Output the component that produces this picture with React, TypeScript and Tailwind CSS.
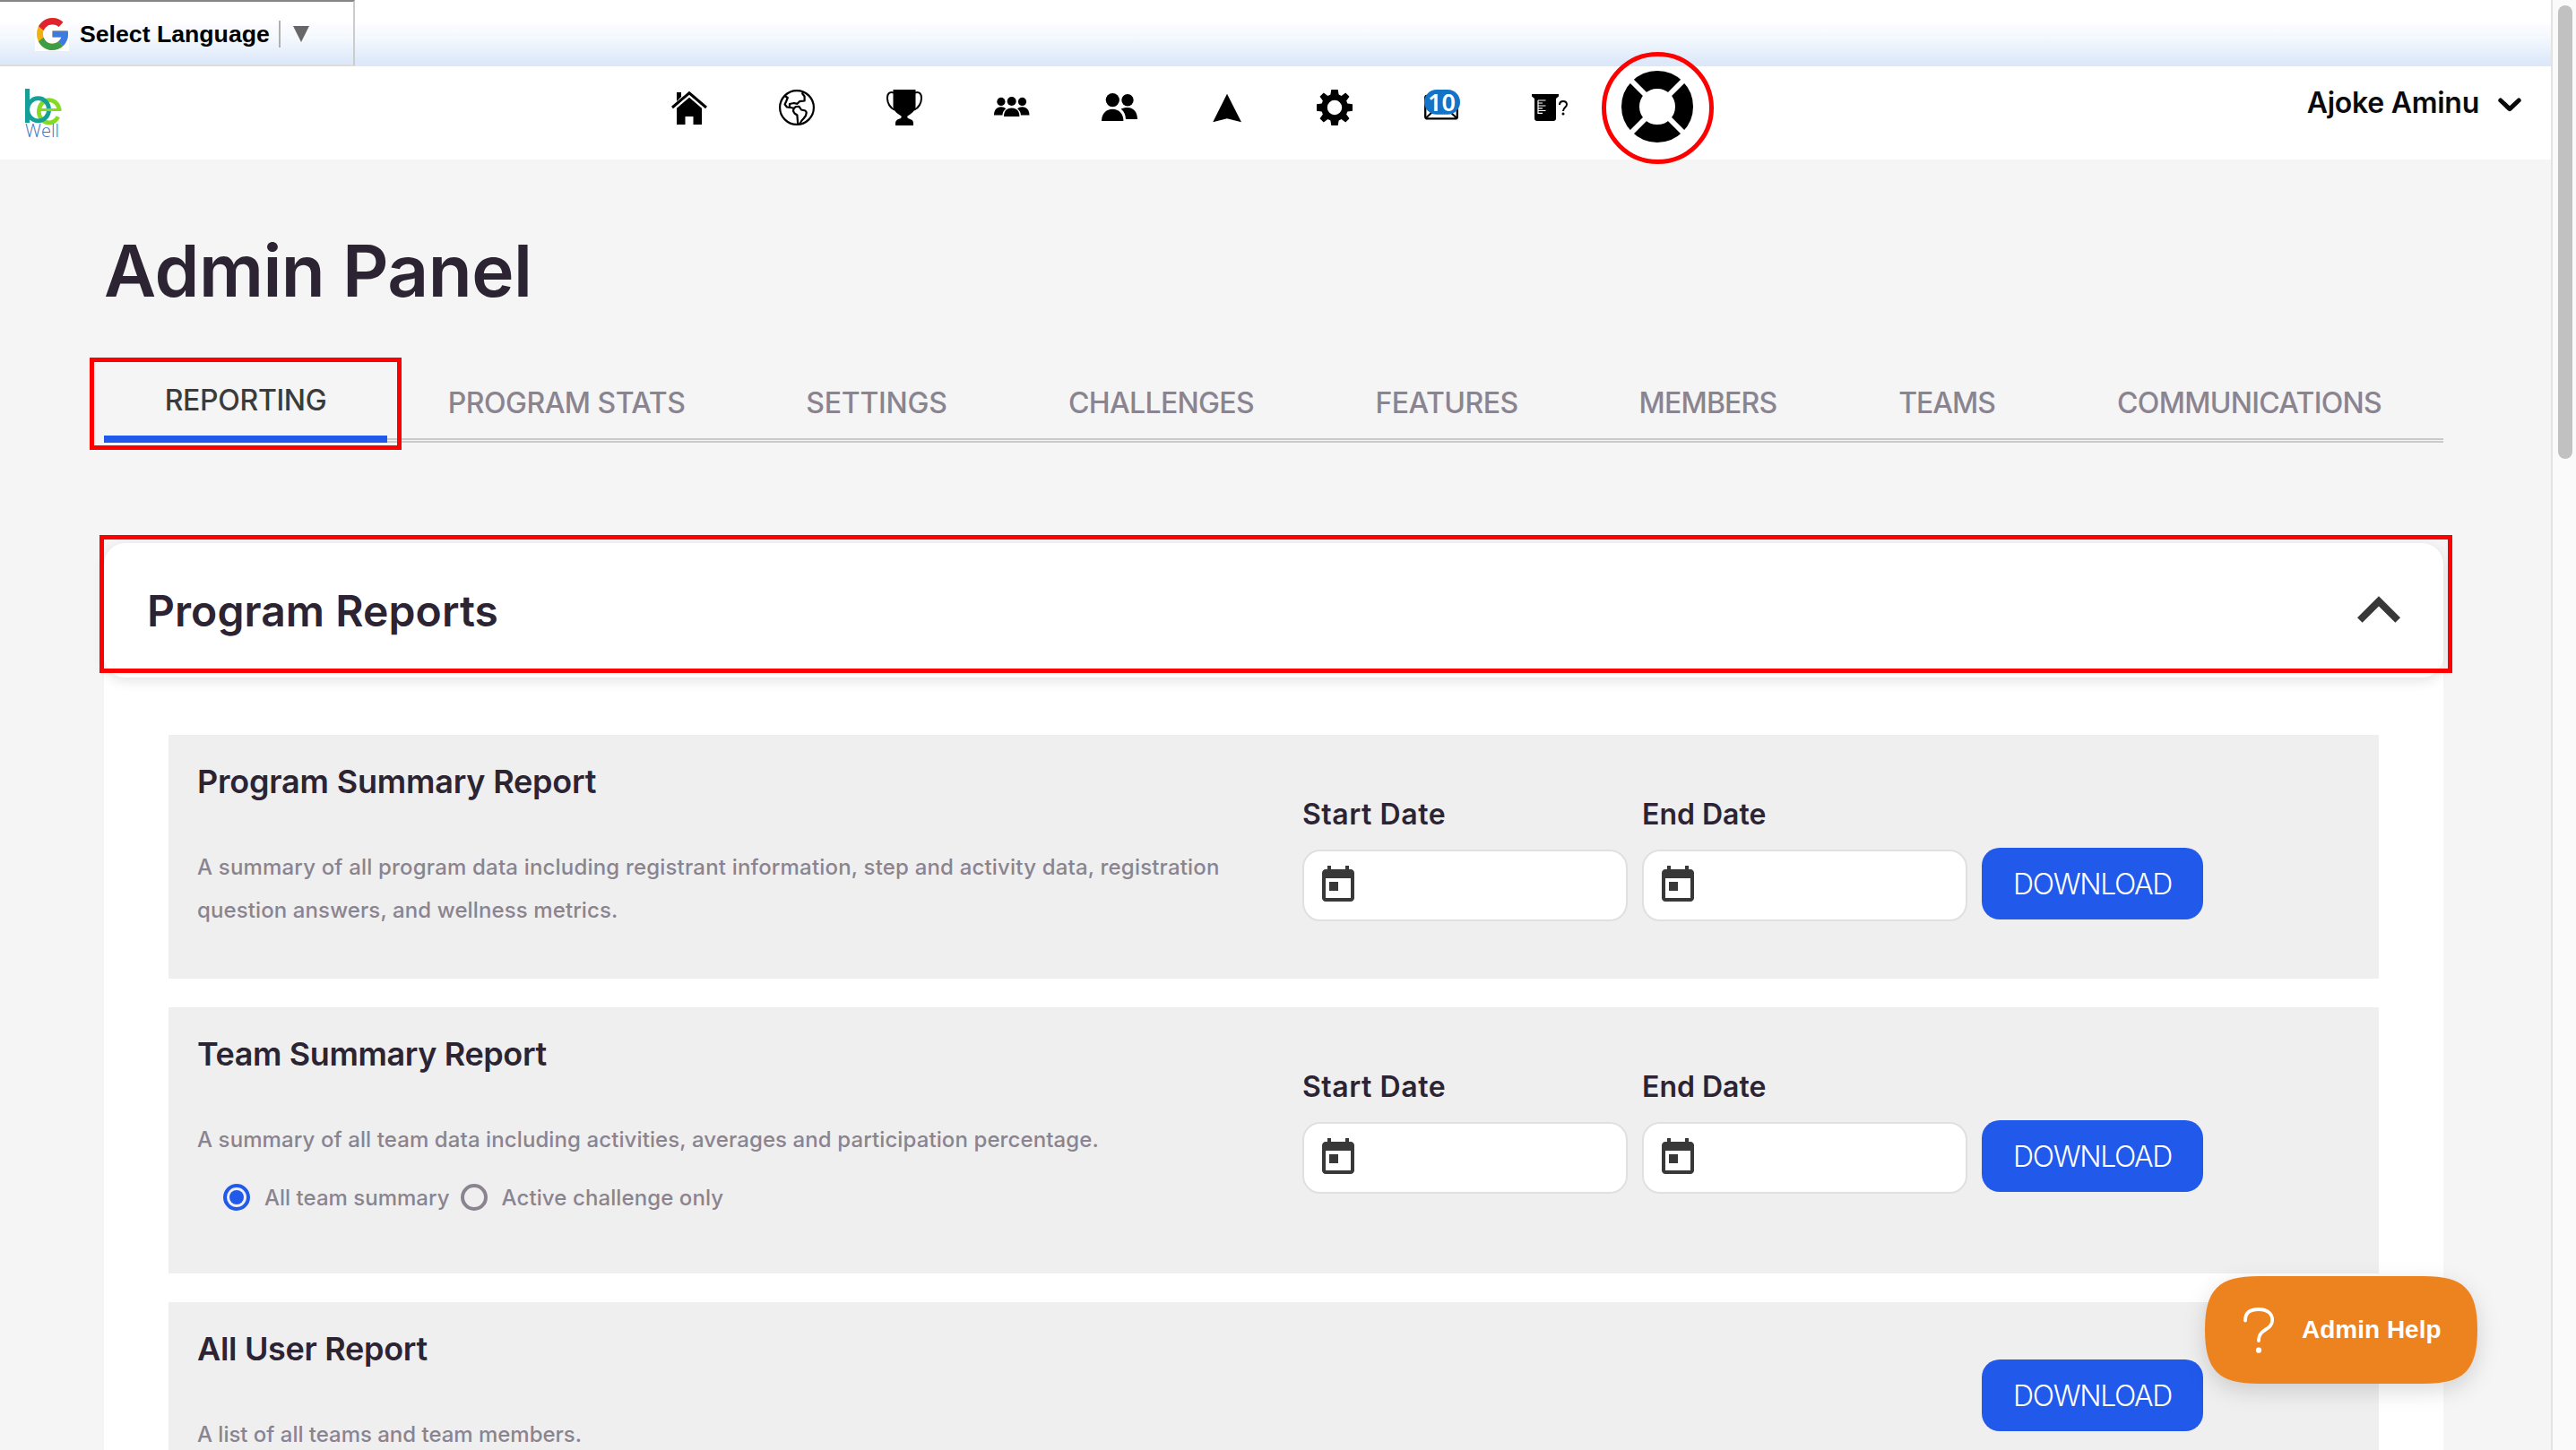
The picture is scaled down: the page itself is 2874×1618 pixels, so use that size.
import type { ReactNode } from "react";

function GoogleLogo() {
  return (
    <div className="flex h-[37px] w-[38px] items-center justify-center bg-white">
      <svg className="h-9 w-[35px]" viewBox="4 4 40 40" preserveAspectRatio="none">
        <path fill="#f2b10e" d="M43.611,20.083H42V20H24v8h11.303c-1.649,4.657-6.08,8-11.303,8c-6.627,0-12-5.373-12-12c0-6.627,5.373-12,12-12c3.059,0,5.842,1.154,7.961,3.039l5.657-5.657C34.046,6.053,29.268,4,24,4C12.955,4,4,12.955,4,24c0,11.045,8.955,20,20,20c11.045,0,20-8.955,20-20C44,22.659,43.862,21.35,43.611,20.083z" />
        <path fill="#e0242f" d="M6.306,14.691l6.571,4.819C14.655,15.108,18.961,12,24,12c3.059,0,5.842,1.154,7.961,3.039l5.657-5.657C34.046,6.053,29.268,4,24,4C16.318,4,9.656,8.337,6.306,14.691z" />
        <path fill="#3e9e45" d="M24,44c5.166,0,9.86-1.977,13.409-5.192l-6.19-5.238C29.211,35.091,26.715,36,24,36c-5.202,0-9.619-3.317-11.283-7.946l-6.522,5.025C9.505,39.556,16.227,44,24,44z" />
        <path fill="#3d7be0" d="M43.611,20.083H42V20H24v8h11.303c-0.792,2.237-2.231,4.166-4.087,5.571l6.19,5.238C36.971,39.205,44,34,44,24C44,22.659,43.862,21.35,43.611,20.083z" />
      </svg>
    </div>
  );
}

function BeWellLogo() {
  return (
    <svg className="mt-[25px] ml-7 h-14 w-[42px] shrink-0 overflow-visible" viewBox="0 0 42 56">
      <path d="M36.8 31.3A11.4 12.6 0 1 1 38 23" fill="none" stroke="#86db22" strokeWidth="4.8" />
      <ellipse cx="14.6" cy="23.3" rx="12" ry="12.6" fill="none" stroke="#159f98" strokeWidth="4.8" />
      <rect x="0" y="0" width="5" height="38" fill="#159f98" />
      <rect x="16.5" y="22" width="24" height="3" fill="#86db22" />
      <text x="0" y="53.5" fontFamily="Open Sans, sans-serif" fontWeight="300" fontSize="20" fill="#4470bd" textLength="38" lengthAdjust="spacingAndGlyphs">
        Well
      </text>
    </svg>
  );
}

function Icon({ children }: { children: ReactNode }) {
  return (
    <svg className="h-10 w-10 shrink-0 overflow-visible" viewBox="0 0 40 40" fill="#000">
      {children}
    </svg>
  );
}

function NavIcons() {
  return (
    <nav className="mt-[26px] ml-[679px] flex gap-20">
      <Icon>
        <path d="M6 3h5v5L6 13z" />
        <path d="M1 20L20 3.8L39 20" fill="none" stroke="#000" strokeWidth="3" />
        <path d="M6 20.8L20 8.8L34 20.8V39H24.5V30H15.5V39H6z" />
      </Icon>
      <Icon>
        <g fill="none" stroke="#000" strokeWidth="2.2" strokeLinejoin="round">
          <circle cx="20" cy="20" r="18.9" />
          <path d="M6.5 7L9.8 9L8.2 13L6.6 16.5L9 19.5L12 19.8L16.6 20.8L19 19L22.5 18.8L25 22.5L29.5 23.5L30.8 25.5L30 29L27.8 32L25.5 34.5L23 38.5" />
          <path d="M27 2L26.2 4.5L28.6 7.5V12.5L23 13.2L20.5 15.8L16.8 15L12 16L12 19.5" />
          <path d="M16.6 20.8L16 24L17.5 26.5L20.4 28.5L21.2 38.5" />
        </g>
      </Icon>
      <Icon>
        <path d="M7.5 0H32.5V19C32.5 24 27 27 23.5 29.5C23 31 23.5 32 25.5 32.5C28.5 33.5 30 35 30 37.5V40H10V37.5C10 35 11.5 33.5 14.5 32.5C16.5 32 17 31 16.5 29.5C13 27 7.5 24 7.5 19z" />
        <path d="M8 3.5C3 2 .8 5 1 10C1.2 15 4 20.5 9 22.5M32 3.5C37 2 39.2 5 39 10C38.8 15 36 20.5 31 22.5" fill="none" stroke="#000" strokeWidth="2" />
      </Icon>
      <Icon>
        <circle cx="19.7" cy="13" r="5" />
        <circle cx="7.9" cy="13.4" r="4.6" />
        <circle cx="31.5" cy="13.4" r="4.6" />
        <path d="M11 30C11 24 14 20.5 19.7 20.5S28.4 24 28.4 30z" />
        <path d="M0 28.5C0 23 3 19.3 7.9 19.3C10 19.3 12 20 13.3 21.3C11 23 9.7 25.5 9.4 28.5z" />
        <path d="M39.5 28.5C39.5 23 36.4 19.3 31.5 19.3C29.4 19.3 27.4 20 26.1 21.3C28.4 23 29.7 25.5 30 28.5z" />
      </Icon>
      <Icon>
        <circle cx="12.3" cy="11.6" r="7.6" />
        <circle cx="29" cy="11.7" r="6.7" />
        <path d="M0 35C0 27 5 21.7 12.2 21.7S24.4 27 24.4 35z" />
        <path d="M21.6 21.6C23.5 20.5 26 20 29 20C36 20 40 25.5 40 33H27C26.8 28 25 24.2 21.6 21.6z" />
      </Icon>
      <Icon>
        <path d="M20 4.7L36 36.3L20 32.3L4.2 36.3z" />
      </Icon>
      <Icon>
        <path
          fillRule="evenodd"
          d="M16.3 0H23.7L24.6 5.6L27.6 6.9L32.2 3.5L36.5 7.8L33.1 12.4L34.4 15.4L40 16.3V23.7L34.4 24.6L33.1 27.6L36.5 32.2L32.2 36.5L27.6 33.1L24.6 34.4L23.7 40H16.3L15.4 34.4L12.4 33.1L7.8 36.5L3.5 32.2L6.9 27.6L5.6 24.6L0 23.7V16.3L5.6 15.4L6.9 12.4L3.5 7.8L7.8 3.5L12.4 6.9L15.4 5.6zM20 11.8a8.2 8.2 0 1 0 0 16.4a8.2 8.2 0 1 0 0-16.4z"
        />
      </Icon>
      <Icon>
        <rect x="1.2" y="7" width="35.6" height="25.4" rx="2" fill="#fff" stroke="#000" strokeWidth="2.3" />
        <path d="M2 31.5L10 24M36 31.5L28 24" stroke="#000" strokeWidth="2" />
        <rect x="0" y="0" width="40" height="27.8" rx="13.9" fill="#1273c7" />
        <text x="19.5" y="24" textAnchor="middle" fontFamily="Noto Sans, sans-serif" fontWeight="600" fontSize="27" fill="#fff">
          10
        </text>
      </Icon>
      <Icon>
        <path d="M0 5H30V7.6L27 10V32Q27 35 24 35H6Q3 35 3 32V10L0 7.6z" />
        <path d="M7 12H15.5M7 15H12M7 18H15.5M7 20.8H12M7 23.5H15.5M7 26.3H12M7 12V27" stroke="#fff" strokeWidth="1.2" />
        <path d="M31 17C31 14.4 32.6 13 35 13C37.3 13 39 14.5 39 16.8C39 19.8 35 20 35 24" fill="none" stroke="#000" strokeWidth="2" />
        <circle cx="35" cy="27" r="1.5" />
      </Icon>
    </nav>
  );
}

function LifeBuoy() {
  return (
    <div className="relative z-10 mt-[5px] ml-[60px] h-20 w-20 shrink-0">
      <svg className="h-20 w-20" viewBox="0 0 80 80">
        <circle cx="40" cy="40" r="30" fill="none" stroke="#000" strokeWidth="20" />
        <path d="M8 8L72 72M72 8L8 72" stroke="#fff" strokeWidth="6" />
      </svg>
      <div className="absolute -top-[21px] -left-[22px] h-[125px] w-[125px] rounded-full border-[5px] border-[#fe0000]" />
    </div>
  );
}

const TABS = [
  { label: "PROGRAM STATS", cls: "w-[400px] tracking-[-0.5px]" },
  { label: "SETTINGS", cls: "w-[292px] tracking-[-0.23px]" },
  { label: "CHALLENGES", cls: "w-[343px] tracking-[-0.65px]" },
  { label: "FEATURES", cls: "w-[294px] tracking-[-0.53px]" },
  { label: "MEMBERS", cls: "w-[289px] tracking-[-0.79px]" },
  { label: "TEAMS", cls: "w-[244px] tracking-[-1.02px]" },
  { label: "COMMUNICATIONS", cls: "w-[431px] tracking-[-0.7px]" },
];

function DateField({ label, cls }: { label: string; cls: string }) {
  return (
    <div className="mt-[69px] w-[363px]">
      <div className={`text-[32px] leading-10 font-semibold text-[#2d2433] ${cls}`}>{label}</div>
      <div className="mt-[19px] h-20 rounded-[20px] border-2 border-[#e0e0e0] bg-white pt-[14px] pl-[14px]">
        <svg className="h-12 w-12" viewBox="0 0 24 24" fill="#383838">
          <path d="M19 3h-1V1h-2v2H8V1H6v2H5c-1.11 0-1.99.9-1.99 2L3 19c0 1.1.89 2 2 2h14c1.1 0 2-.9 2-2V5c0-1.1-.9-2-2-2zm0 16H5V8h14v11zM7 10h5v5H7z" />
        </svg>
      </div>
    </div>
  );
}

function DownloadButton({ cls }: { cls: string }) {
  return (
    <button className={`mr-[196px] ml-auto h-20 w-[247px] shrink-0 rounded-[20px] bg-[#2159eb] pt-0.5 text-center text-[32px] leading-[78px] font-light tracking-[-1.35px] text-white ${cls}`}>
      DOWNLOAD
    </button>
  );
}

function ReportCard({ title, titleCls, cls, dates, buttonCls, children }: { title: string; titleCls: string; cls: string; dates?: boolean; buttonCls: string; children: ReactNode }) {
  return (
    <section className={`flex shrink-0 items-start bg-[#efefef] ${cls}`}>
      <div className="w-[1265px] shrink-0 pt-6 pl-8 text-[24px] leading-[48px] font-medium whitespace-nowrap text-[#8a8490]">
        <h3 className={`mb-[44px] text-[36px] leading-[56px] font-semibold text-[#2d2433] ${titleCls}`}>{title}</h3>
        {children}
      </div>
      {dates && (
        <div className="flex gap-4">
          <DateField label="Start Date" cls="tracking-[0.55px]" />
          <DateField label="End Date" cls="tracking-[0px]" />
        </div>
      )}
      <DownloadButton cls={buttonCls} />
    </section>
  );
}

function HelpButton() {
  return (
    <button className="absolute top-[1424px] left-[2460px] z-30 h-[120px] w-[304px]">
      <svg className="absolute inset-0 h-full w-full overflow-visible drop-shadow-[0_8px_12px_rgba(0,0,0,0.14)]" viewBox="0 0 304 120">
        <path d="M0 60C0 15 15 0 60 0H244C289 0 304 15 304 60C304 105 289 120 244 120H60C15 120 0 105 0 60z" fill="#ed831f" />
      </svg>
      <span className="relative flex h-full items-center pl-[43px]">
        <svg className="h-[51px] w-[34px] overflow-visible" viewBox="0 0 34 51">
          <path d="M2 14.5C2 6 7 2 17 2C27 2 32.2 7 32.2 14C32.2 21 26 23.5 22 26.5C18.5 29 17 32 17 37" fill="none" stroke="#fff" strokeWidth="3.8" strokeLinecap="round" />
          <circle cx="17" cy="47.7" r="3.1" fill="#fff" />
        </svg>
        <span className="ml-[31px] font-['Liberation_Sans',Arial,sans-serif] text-[28px] leading-10 font-bold whitespace-nowrap text-white">Admin Help</span>
      </span>
    </button>
  );
}

export default function App() {
  return (
    <div className="relative flex h-[1618px] w-[2874px] overflow-hidden bg-[#f5f5f5] font-['Inter',sans-serif]">
      <div className="flex w-[2846px] shrink-0 flex-col">
        <div className="h-[74px] shrink-0 bg-[linear-gradient(to_bottom,#fff_0px,#fff_24px,#fbfbff_30px,#f4f9fd_41px,#ebf3fc_52px,#e6edfb_60px,#deeaf9_67px,#dce8f9_74px)]">
          <div className="flex h-[74px] w-[396px] items-center border-t-2 border-r-2 border-b-2 border-t-[#868686] border-r-[#cccccc] border-b-[#dddddd] pt-0.5 pl-[39px]">
            <GoogleLogo />
            <span className="ml-3 font-['Liberation_Sans',Arial,sans-serif] text-[26.67px] leading-8 font-bold whitespace-nowrap text-black">Select Language</span>
            <span className="ml-[10px] h-[30px] w-0.5 bg-[#b0b0b0]" />
            <svg className="ml-[14px] h-[18px] w-[18px]" viewBox="0 0 18 18">
              <path d="M0 0H18L9 18z" fill="#676767" />
            </svg>
          </div>
        </div>

        <header className="flex h-[104px] shrink-0 items-start bg-white">
          <BeWellLogo />
          <NavIcons />
          <LifeBuoy />
          <div className="mt-[21px] ml-auto flex items-start pr-[33px]">
            <span className="text-[32px] leading-10 font-semibold tracking-[-0.27px] whitespace-nowrap text-[#0b0b0b]">Ajoke Aminu</span>
            <svg className="mt-[14px] ml-[21px] h-4 w-[26px]" viewBox="0 0 26 16">
              <path d="M2.8 3L13 12.6L23.2 3" fill="none" stroke="#0b0b0b" strokeWidth="5" strokeLinecap="round" strokeLinejoin="round" />
            </svg>
          </div>
        </header>

        <main className="flex min-h-0 flex-1 flex-col pt-[74px] pr-[120px] pl-[116px]">
          <h1 className="shrink-0 text-[80px] leading-[100px] font-semibold tracking-[-0.51px] text-[#2d2433]">Admin Panel</h1>

          <div className="mt-12 flex h-[94px] shrink-0 border-b-[5px] border-double border-[#cacacd] text-center text-[32px] leading-10 font-medium text-[#8a8490]">
            <div className="relative h-[94px] w-[316px] shrink-0 border-b-8 border-solid border-[#2159eb] pt-[27px] tracking-[-0.33px] text-[#3b3b3b]">
              REPORTING
              <div className="absolute -top-px -left-4 h-[103px] w-[348px] border-[5px] border-solid border-[#fe0000]" />
            </div>
            {TABS.map((t) => (
              <div key={t.label} className={`shrink-0 pt-[30px] ${t.cls}`}>
                {t.label}
              </div>
            ))}
          </div>

          <div className="relative z-10 mt-28 flex h-[150px] shrink-0 items-start rounded-3xl bg-white pt-[46px] shadow-[0_4px_14px_rgba(0,0,0,0.11)]">
            <h2 className="pl-12 text-[48px] leading-[60px] font-semibold tracking-[0.08px] text-[#2d2433]">Program Reports</h2>
            <svg className="mt-[13px] mr-12 ml-auto h-[30px] w-12" viewBox="6 8 12 7.41" fill="#383838">
              <path d="M12 8l-6 6 1.41 1.41L12 10.83l4.59 4.58L18 14z" />
            </svg>
            <div className="absolute -top-[9px] -left-[5px] h-[154px] w-[2625px] border-[5px] border-[#fe0000]" />
          </div>

          <div className="-mt-6 flex min-h-0 flex-1 flex-col gap-8 overflow-hidden bg-white px-[72px] pt-[88px]">
            <ReportCard title="Program Summary Report" titleCls="tracking-[-0.2px]" cls="h-[272px]" dates buttonCls="mt-[126px]">
              <p className="tracking-[0.18px]">
                A summary of all program data including registrant information, step and activity data, registration
              </p>
              <p className="tracking-[0.11px]">question answers, and wellness metrics.</p>
            </ReportCard>

            <ReportCard title="Team Summary Report" titleCls="tracking-[-0.39px]" cls="h-[297px]" dates buttonCls="mt-[126px]">
              <p className="tracking-[0.1px]">A summary of all team data including activities, averages and participation percentage.</p>
              <div className="mt-[25px] flex h-[30px] items-center pl-[29px] leading-[30px]">
                <span className="flex h-[30px] w-[30px] items-center justify-center rounded-full border-4 border-[#2159eb]">
                  <span className="h-4 w-4 rounded-full bg-[#2159eb]" />
                </span>
                <span className="ml-4 pt-0.5 tracking-[0.02px]">All team summary</span>
                <span className="ml-3 h-[30px] w-[30px] rounded-full border-4 border-[#8a8490]" />
                <span className="ml-4 pt-0.5 tracking-[0.1px]">Active challenge only</span>
              </div>
            </ReportCard>

            <ReportCard title="All User Report" titleCls="tracking-[-0.3px]" cls="h-[240px]" buttonCls="mt-16">
              <p className="tracking-[-0.02px]">A list of all teams and team members.</p>
            </ReportCard>
          </div>
        </main>
      </div>

      <div className="w-7 shrink-0 border-l-2 border-[#e2e2e2] bg-[#fafafa] pt-[6px] pl-[6px]">
        <div className="h-[506px] w-4 rounded-full bg-[#c1c1c1]" />
      </div>

      <HelpButton />
    </div>
  );
}
